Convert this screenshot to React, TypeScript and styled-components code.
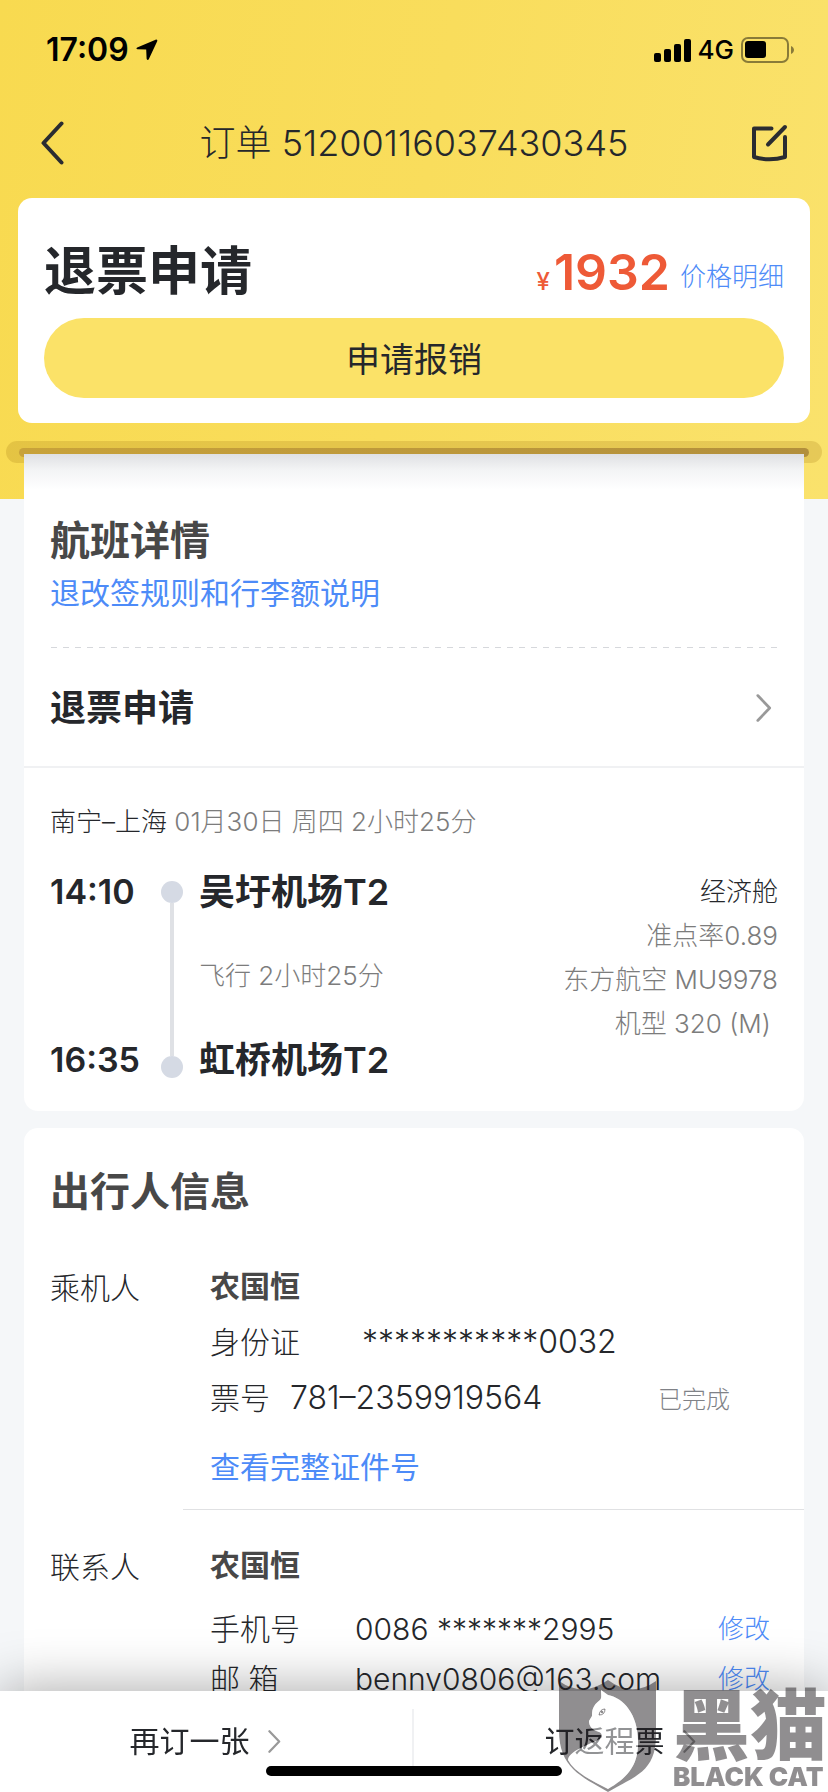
import React from "react";
import styled, { createGlobalStyle } from "styled-components";

const GlobalStyle = createGlobalStyle`
  *, *::before, *::after { box-sizing: border-box; }
  body {
    margin: 0;
    background: #f5f7f9;
    color: #25272b;
    font-family: Inter, "Noto Sans CJK SC", sans-serif;
    font-weight: 300;
    font-size: 30px;
    line-height: 40px;
  }
  button {
    margin: 0;
    padding: 0;
    border: 0;
    background: none;
    color: inherit;
    font: inherit;
    cursor: pointer;
  }
  a { color: inherit; text-decoration: none; }
  h1, h2, h3, p { margin: 0; font: inherit; }
`;

const Page = styled.div`
  min-height: 100vh;
  padding-bottom: 88px;
`;

const Hero = styled.header`
  padding-bottom: 36px;
  background: linear-gradient(100deg, #f8da50 0%, #f9dd5c 50%, #fae26c 100%);
`;

const StatusBar = styled.div`
  display: flex;
  align-items: center;
  justify-content: space-between;
  height: 100px;
  padding: 0 34px 0 46px;
  color: #000;
`;

const StatusGroup = styled.div`
  display: flex;
  align-items: center;
  gap: 7px;
`;

const Clock = styled.span`
  font-size: 32px;
  font-weight: 600;
`;

const Network = styled.span`
  font-size: 26px;
  font-weight: 500;
`;

const NavBar = styled.nav`
  display: flex;
  align-items: center;
  justify-content: space-between;
  height: 86px;
  padding: 0 40px;
`;

const NavButton = styled.button`
  display: flex;
  align-items: center;
  width: 36px;
  height: 60px;
`;

const NavTitle = styled.h1`
  font-size: 36px;
  font-weight: 300;
`;

const SummaryCard = styled.section`
  margin: 12px 18px 0;
  padding: 46px 26px 25px;
  border-radius: 14px;
  background: #fff;
`;

const SummaryRow = styled.div`
  display: flex;
  align-items: center;
  justify-content: space-between;
  height: 56px;
  margin-bottom: 18px;
`;

const SummaryTitle = styled.h2`
  font-size: 52px;
  font-weight: 700;
`;

const Price = styled.div`
  display: flex;
  align-items: baseline;
  padding-top: 10px;
  color: #ee5a37;
  font-weight: 500;
`;

const Currency = styled.span`
  margin-right: 4px;
  font-size: 24px;
`;

const Amount = styled.span`
  margin-right: 10px;
  font-size: 50px;
  font-weight: 600;
`;

const BlueLink = styled.a`
  color: #4d8bf8;
  font-weight: 400;
`;

const PriceLink = styled(BlueLink)`
  align-self: center;
  font-size: 26px;
  font-weight: 300;
`;

const PrimaryButton = styled.button`
  display: block;
  width: 100%;
  height: 80px;
  padding-top: 3px;
  border-radius: 40px;
  background: #fbe268;
  font-size: 34px;
  font-weight: 400;
`;

const Slot = styled.div`
  height: 22px;
  margin: 18px 6px 0;
  padding: 7px 13px;
  border-radius: 11px;
  background: rgba(150, 105, 10, 0.2);
`;

const SlotOpening = styled.div`
  height: 9px;
  border-radius: 5px;
  background: linear-gradient(90deg, #c8a23a, #b28f3c);
`;

const Ticket = styled.section`
  position: relative;
  margin: -45px 24px 0;
  border-radius: 0 0 14px 14px;
  background: linear-gradient(#dfe0e3 0, #f3f4f5 16px, #fff 36px);
`;

const TicketHead = styled.div`
  display: flex;
  flex-direction: column;
  align-items: flex-start;
  gap: 8px;
  padding: 63px 26px 34px;
`;

const SectionTitle = styled.h2`
  color: #484848;
  font-size: 40px;
  font-weight: 700;
  line-height: 48px;
`;

const DashedRule = styled.div`
  height: 1px;
  margin: 0 27px;
  background: repeating-linear-gradient(90deg, #d6d8dc 0 6px, transparent 6px 12px);
`;

const StatusRow = styled.a`
  display: flex;
  align-items: center;
  justify-content: space-between;
  height: 120px;
  padding: 2px 32px 0 26px;
  border-bottom: 2px solid #f0f1f3;
  font-size: 36px;
  font-weight: 700;
`;

const Flight = styled.div`
  padding: 34px 26px 29px;
  font-size: 26px;
`;

const Route = styled.p`
  margin-bottom: 28px;
  color: #7c7c7c;
`;

const Dark = styled.span`
  color: #25272b;
`;

const FlightGrid = styled.div`
  display: grid;
  grid-template-columns: 95px 22px 1fr auto;
  column-gap: 16px;
  min-height: 212px;
  line-height: 44px;
`;

const Stops = styled.div`
  display: flex;
  flex-direction: column;
  justify-content: space-between;
  white-space: nowrap;
`;

const StopTime = styled.span`
  font-size: 34px;
  font-weight: 600;
`;

const StopName = styled.h3`
  font-size: 36px;
  font-weight: 600;
`;

const Duration = styled.p`
  color: #7c7c7c;
`;

const Timeline = styled.div`
  display: flex;
  flex-direction: column;
  align-items: center;
  padding: 11px 0 4px;
`;

const Dot = styled.span`
  width: 22px;
  height: 22px;
  border-radius: 50%;
  background: #d5dae4;
`;

const Track = styled.span`
  flex: 1;
  width: 4px;
  background: #dfe1e5;
`;

const Facts = styled.div`
  color: #7c7c7c;
  text-align: right;
  white-space: pre;
`;

const Travellers = styled.section`
  margin: 17px 24px 0;
  padding: 40px 0 0;
  border-radius: 14px;
  background: #fff;
`;

const TravellersTitle = styled(SectionTitle)`
  margin: 0 26px 42px;
`;

const Person = styled.div`
  display: grid;
  grid-template-columns: 160px 1fr;
  padding: 0 26px;
`;

const Divider = styled.div`
  height: 1px;
  margin: 22px 0 27px 159px;
  background: #e0e1e3;
`;

const Role = styled.h3`
  line-height: 60px;
`;

const PersonName = styled.p<{ $gap?: boolean }>`
  margin-bottom: ${(p) => (p.$gap ? 11 : 0)}px;
  color: #484848;
  font-weight: 700;
  line-height: 56px;
`;

const Field = styled.div<{ $label: number; $height: number }>`
  display: grid;
  grid-template-columns: ${(p) => p.$label}px 1fr auto;
  line-height: ${(p) => p.$height}px;
  white-space: nowrap;
`;

const LargeValue = styled.span`
  font-size: 32px;
`;

const Done = styled.span`
  margin-right: 48px;
  padding-top: 2px;
  color: #808287;
  font-size: 24px;
`;

const EditButton = styled.button`
  margin-right: 8px;
  color: #4d8bf8;
  font-size: 26px;
`;

const FullId = styled(BlueLink)`
  display: block;
  margin-top: 19px;
`;

const Footer = styled.footer`
  position: fixed;
  right: 0;
  bottom: 0;
  left: 0;
  display: grid;
  grid-template-columns: 1fr 1fr;
  height: 101px;
  padding-top: 18px;
  background: #fff;
  box-shadow: 0 0 56px rgba(0, 0, 0, 0.36);
`;

const FooterAction = styled.button`
  display: flex;
  justify-content: center;
  align-items: center;
  gap: 18px;
  height: 64px;
  padding-right: 2px;
  font-weight: 400;

  &:first-child { border-right: 2px solid #f0f1f3; }
`;

const HomeIndicator = styled.div`
  position: absolute;
  bottom: 16px;
  left: 50%;
  width: 296px;
  height: 10px;
  margin-left: -148px;
  border-radius: 5px;
  background: #000;
`;

const Watermark = styled.div`
  position: absolute;
  right: 0;
  bottom: 0;
  display: flex;
  align-items: flex-end;
  gap: 16px;
  color: rgba(34, 30, 34, 0.5);
  white-space: nowrap;
  pointer-events: none;
`;

const WatermarkText = styled.div`
  display: flex;
  flex-direction: column;
  width: 155px;
  padding-bottom: 2px;
`;

const WatermarkName = styled.span`
  font-size: 77px;
  font-weight: 900;
  line-height: 76px;
`;

const WatermarkLatin = styled.span`
  font-size: 26px;
  font-weight: 900;
  line-height: 26px;
`;

const Chevron = ({ width, height }: { width: number; height: number }) => (
  <svg width={width} height={height} viewBox="0 0 15 27" fill="none" aria-hidden="true">
    <path d="M1.5 1.5 13 13.5 1.5 25.5" stroke="#999" strokeWidth="2.6" strokeLinecap="round" strokeLinejoin="round" />
  </svg>
);

const LocationIcon = () => (
  <svg width="22" height="22" viewBox="0 0 22 22" aria-hidden="true">
    <path d="M19.6.7 1.2 8.4C.1 8.9.3 10.2 1.5 10.2L10.2 10.5 10.6 19.5C10.7 21.2 12.3 21.3 12.9 20L21.2 2.3C21.7 1.1 20.8.2 19.6.7Z" fill="#000" />
  </svg>
);

const SignalIcon = () => (
  <svg width="37" height="23" viewBox="0 0 37 23" aria-hidden="true">
    <rect x="0" y="14" width="7" height="9" rx="2" />
    <rect x="10" y="10" width="7" height="13" rx="2" />
    <rect x="20" y="5" width="7" height="18" rx="2" />
    <rect x="30" y="0" width="7" height="23" rx="2" />
  </svg>
);

const BatteryIcon = () => (
  <svg width="53" height="26" viewBox="0 0 53 26" aria-hidden="true">
    <rect x="1" y="1" width="46" height="24" rx="6" fill="none" stroke="#000" strokeOpacity=".45" strokeWidth="2" />
    <rect x="4" y="4" width="21" height="17" rx="3" />
    <path d="M50 9c4 2 4 6 0 8Z" fillOpacity=".45" />
  </svg>
);

const BackIcon = () => (
  <svg width="24" height="44" viewBox="0 0 24 44" fill="none" stroke="#2a2c31" strokeWidth="4" strokeLinecap="round" strokeLinejoin="round" aria-hidden="true">
    <path d="M21.5 2.5 3.5 22 21.5 41.5" />
  </svg>
);

const EditIcon = () => (
  <svg width="36" height="38" viewBox="0 0 36 38" fill="none" stroke="#2a2c31" strokeWidth="4" strokeLinecap="round" strokeLinejoin="round" aria-hidden="true">
    <path d="M19.5 4.5H2V33Q17.5 37.5 33 33V13" />
    <path d="M33 3 16 20.5" />
  </svg>
);

const ShieldIcon = () => (
  <svg width="98" height="112" viewBox="0 0 98 112" aria-hidden="true">
    <path
      fill="currentColor"
      fillRule="evenodd"
      d="M0 1Q24 18 49 0Q73 18 97 1V55C97 92 76 96 49 112C22 96 0 88 0 50Z
         M42 10C42 15 43 18 41 20C33 26 33 31 33 36L30 41C30 46 33 49 37 51C40 52 43 52 43 57C40 62 10 69 9 80C16 93 34 101 49 109C66 99 80 87 79 61C79 35 65 18 49 15Z"
    />
    <path
      fill="#fff"
      fillOpacity=".5"
      d="M42 10C42 15 43 18 41 20C33 26 33 31 33 36L30 41C30 46 33 49 37 51C40 52 43 52 43 57C40 62 10 69 9 80C16 93 34 101 49 109C66 99 80 87 79 61C79 35 65 18 49 15Z"
    />
    <path d="M40 35Q41 29 46 29Q46 35 40 35Z" fill="none" stroke="currentColor" strokeWidth="1" />
    <circle cx="43" cy="32" r="1.3" fill="currentColor" />
  </svg>
);

export default function App() {
  return (
    <Page>
      <GlobalStyle />
      <Hero>
        <StatusBar>
          <StatusGroup>
            <Clock>17:09</Clock>
            <LocationIcon />
          </StatusGroup>
          <StatusGroup>
            <SignalIcon />
            <Network>4G</Network>
            <BatteryIcon />
          </StatusGroup>
        </StatusBar>
        <NavBar>
          <NavButton aria-label="返回"><BackIcon /></NavButton>
          <NavTitle>订单 51200116037430345</NavTitle>
          <NavButton aria-label="编辑"><EditIcon /></NavButton>
        </NavBar>
        <SummaryCard>
          <SummaryRow>
            <SummaryTitle>退票申请</SummaryTitle>
            <Price>
              <Currency>¥</Currency>
              <Amount>1932</Amount>
              <PriceLink href="#price">价格明细</PriceLink>
            </Price>
          </SummaryRow>
          <PrimaryButton>申请报销</PrimaryButton>
        </SummaryCard>
        <Slot><SlotOpening /></Slot>
      </Hero>

      <Ticket>
        <TicketHead>
          <SectionTitle>航班详情</SectionTitle>
          <BlueLink href="#rules">退改签规则和行李额说明</BlueLink>
        </TicketHead>
        <DashedRule />
        <StatusRow href="#refund">
          退票申请
          <Chevron width={16} height={28} />
        </StatusRow>
        <Flight>
          <Route><Dark>南宁–上海</Dark> 01月30日 周四 2小时25分</Route>
          <FlightGrid>
            <Stops>
              <StopTime>14:10</StopTime>
              <StopTime>16:35</StopTime>
            </Stops>
            <Timeline><Dot /><Track /><Dot /></Timeline>
            <Stops>
              <StopName>吴圩机场T2</StopName>
              <Duration>飞行 2小时25分</Duration>
              <StopName>虹桥机场T2</StopName>
            </Stops>
            <Facts>
              <p><Dark>经济舱</Dark></p>
              <p>准点率0.89</p>
              <p>东方航空 MU9978</p>
              <p>{"机型 320 (M) \u200b"}</p>
            </Facts>
          </FlightGrid>
        </Flight>
      </Ticket>

      <Travellers>
        <TravellersTitle>出行人信息</TravellersTitle>
        <Person>
          <Role>乘机人</Role>
          <div>
            <PersonName>农国恒</PersonName>
            <Field $label={152} $height={56}>
              <span>身份证</span>
              <LargeValue>***********0032</LargeValue>
            </Field>
            <Field $label={80} $height={56}>
              <span>票号</span>
              <LargeValue>781–2359919564</LargeValue>
              <Done>已完成</Done>
            </Field>
            <FullId href="#id">查看完整证件号</FullId>
          </div>
        </Person>
        <Divider />
        <Person>
          <Role>联系人</Role>
          <div>
            <PersonName $gap>农国恒</PersonName>
            <Field $label={145} $height={50}>
              <span>手机号</span>
              <span>0086 *******2995</span>
              <EditButton>修改</EditButton>
            </Field>
            <Field $label={145} $height={50}>
              <span>邮 箱</span>
              <span>benny0806@163.com</span>
              <EditButton>修改</EditButton>
            </Field>
          </div>
        </Person>
      </Travellers>

      <Footer>
        <FooterAction>再订一张<Chevron width={13} height={23} /></FooterAction>
        <FooterAction>订返程票<Chevron width={13} height={23} /></FooterAction>
        <HomeIndicator />
        <Watermark>
          <ShieldIcon />
          <WatermarkText>
            <WatermarkName>黑猫</WatermarkName>
            <WatermarkLatin>BLACK CAT</WatermarkLatin>
          </WatermarkText>
        </Watermark>
      </Footer>
    </Page>
  );
}
